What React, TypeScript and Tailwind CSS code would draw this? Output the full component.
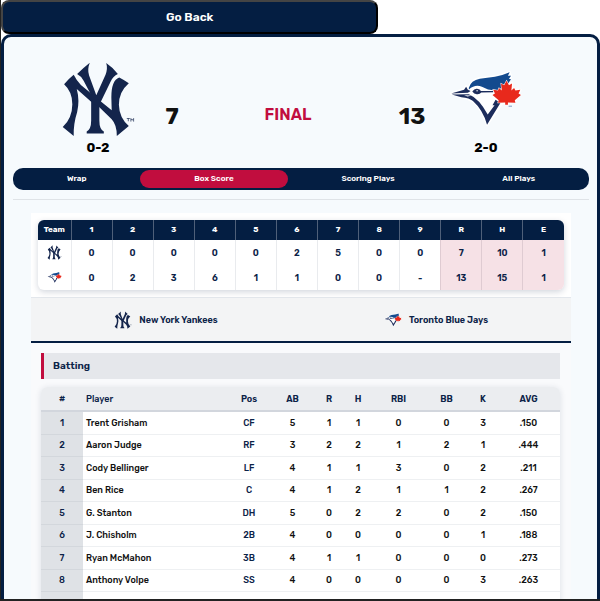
import React from "react";

type LogoProps = { className?: string };

function YankeesLogo({ className }: LogoProps) {
  return (
    <svg viewBox="18 22 216 222" className={className} role="img" aria-label="New York Yankees logo">
      <g fill="#14254c">
        <path d="M102 27Q84 41 65 60Q77 66 84 80L106 121V196Q106 222 93 228V234H143V228Q130 222 130 196V150L163 82Q170 66 184 60Q168 40 150 28Q155 44 148 62L121 122L100 64Q94 46 102 27Z" />
        <path d="M55 62Q42 72 27 90Q51 112 51 148Q51 188 23 215L55 241Q54 206 65 172Q73 138 64 104L106 141L130 157L166 192Q181 208 181 241L216 212Q188 188 187 150Q187 112 216 87Q202 77 188 70Q165 78 165 128L166 166L130 137L76 92Q64 80 55 62Z" />
      </g>
      <path d="M210 190h9M214.500 190v8M222 199v-9l4 5 4-5v9" fill="none" stroke="#14254c" strokeWidth="2" />
    </svg>
  );
}

function BlueJaysLogo({ className }: LogoProps) {
  return (
    <svg viewBox="16 18 216 204" className={className} role="img" aria-label="Toronto Blue Jays logo">
      <path
        d="M21 104L60 91L66 82L74 88Q80 64 106 59L150 54Q176 48 193 41L197 54L190 70L200 74L198 92L225 93L208 128L172 132L127 196Q112 150 88 129Q72 118 52 115Z"
        fill="#fff"
        stroke="#fff"
        strokeWidth="6"
        strokeLinejoin="round"
      />
      <path d="M74 87Q80 66 106 61L150 55Q176 50 193 42L188 52L197 52L191 61L197 62L188 76L156 96L130 92L112 84Q92 76 74 92Z" fill="#134a8e" />
      <path d="M22 104L60 93L66 84L71 93L79 97L71 102Z" fill="#1d2d5c" />
      <path d="M24 107L74 106Q104 119 129 165L149 138H143L152 122L166 132L127 195Q115 152 86 126Q76 117 52 115Z" fill="#1d2d5c" />
      <path d="M60 109L83 110L70 113Z" fill="#fff" />
      <path d="M84 98Q90 89 98 90Q107 91 109 97L145 97V100L110 101Q106 107 97 106Q89 105 84 98Z" fill="#1d2d5c" />
      <circle cx="98" cy="96" r="2" fill="#fff" />
      <path
        d="M184 67L191 80L200 75L198 95L206 88L210 95L224 93L219 104L226 108L208 124L210 131L188 130V137H180V130L159 131L161 124L143 108L150 104L145 93L159 95L162 88L170 95L168 75L177 80Z"
        fill="#e8291c"
        stroke="#fff"
        strokeWidth="3"
        paintOrder="stroke"
      />
      <path d="M190 141h10" stroke="#7f9cc4" strokeWidth="3" />
    </svg>
  );
}

const innings = ["1", "2", "3", "4", "5", "6", "7", "8", "9", "R", "H", "E"];

const lineScore = [
  { name: "New York Yankees", Logo: YankeesLogo, cells: ["0", "0", "0", "0", "0", "2", "5", "0", "0", "7", "10", "1"] },
  { name: "Toronto Blue Jays", Logo: BlueJaysLogo, cells: ["0", "2", "3", "6", "1", "1", "0", "0", "-", "13", "15", "1"] },
];

const columns = ["Pos", "AB", "R", "H", "RBI", "BB", "K", "AVG"];

const batting = [
  ["Trent Grisham", "CF", "5", "1", "1", "0", "0", "3", ".150"],
  ["Aaron Judge", "RF", "3", "2", "2", "1", "2", "1", ".444"],
  ["Cody Bellinger", "LF", "4", "1", "1", "3", "0", "2", ".211"],
  ["Ben Rice", "C", "4", "1", "2", "1", "1", "2", ".267"],
  ["G. Stanton", "DH", "5", "0", "2", "2", "0", "2", ".150"],
  ["J. Chisholm", "2B", "4", "0", "0", "0", "0", "1", ".188"],
  ["Ryan McMahon", "3B", "4", "1", "1", "0", "0", "0", ".273"],
  ["Anthony Volpe", "SS", "4", "0", "0", "0", "0", "3", ".263"],
];

const tabs = ["Wrap", "Box Score", "Scoring Plays", "All Plays"];

function Scoreboard() {
  return (
    <header className="flex pt-6 pr-[66px] pl-12 text-black">
      <div className="flex w-[74px] flex-col items-center">
        <YankeesLogo className="h-[76px] w-[74px]" />
        <p className="mt-[3px] text-[13px] leading-4 font-bold">0-2</p>
      </div>
      <p className="w-[74px] pt-[41px] text-center text-[23px] leading-7 font-bold text-[#111]">7</p>
      <p className="flex-1 pt-[42px] pr-2 text-center text-base leading-6 font-semibold text-[#c10d3e]">FINAL</p>
      <p className="w-[74px] pt-[41px] text-center text-[23px] leading-7 font-bold text-[#111]">13</p>
      <div className="flex w-[74px] flex-col items-center">
        <BlueJaysLogo className="h-[76px] w-[74px]" />
        <p className="mt-[3px] text-[13px] leading-4 font-bold">2-0</p>
      </div>
    </header>
  );
}

function LineScore() {
  return (
    <div className="border-b border-[#e3e7ec] bg-white p-[7px]">
      <div className="overflow-hidden rounded-md shadow-[0_2px_6px_rgba(4,30,66,0.18)]">
        <table className="w-full table-fixed border-collapse text-center text-[#0c2348]">
          <thead className="bg-[#041e42] text-white">
            <tr className="h-[20px] text-[8px] leading-3 font-bold">
              <th scope="col" className="w-[33px]">Team</th>
              {innings.map((label) => (
                <th key={label} scope="col" className="border-l border-[#4f6079]">{label}</th>
              ))}
            </tr>
          </thead>
          <tbody>
            {lineScore.map(({ name, Logo, cells }) => (
              <tr key={name} className="h-[25px] text-[9px] leading-3 font-semibold">
                <th scope="row"><Logo className="mx-auto size-[15px]" /></th>
                {cells.map((value, i) => (
                  <td key={i} className={i > 8 ? "border-l border-[#dfcbd2] bg-[#f6e1e6]" : "border-l border-[#e9ebee]"}>{value}</td>
                ))}
              </tr>
            ))}
          </tbody>
        </table>
      </div>
    </div>
  );
}

function Batting() {
  return (
    <section className="bg-[#f9fafc] pt-[10px] pr-[11px] pl-[10px] text-[9px] leading-3 font-medium">
      <h2 className="border-l-[3px] border-[#c10d3e] bg-[#e5e7eb] px-[9px] py-[5px] text-[10px] leading-4 font-semibold text-[#0c2348]">Batting</h2>
      <div className="mt-2 overflow-hidden rounded-t-md shadow-[0_1px_6px_rgba(4,30,66,0.12)]">
        <table className="w-full table-fixed border-collapse text-center">
          <colgroup>
            <col className="w-[42px]" />
            <col />
            <col className="w-[42px]" />
            <col className="w-[45px]" />
            <col className="w-[28px]" />
            <col className="w-[30px]" />
            <col className="w-[51px]" />
            <col className="w-[45px]" />
            <col className="w-[28px]" />
            <col className="w-[63px]" />
          </colgroup>
          <thead className="bg-[#ebedf0] text-[#0c2348]">
            <tr className="h-[24px] border-b-2 border-[#d2d6dd]">
              <th scope="col" className="font-semibold">#</th>
              <th scope="col" className="pl-[3px] text-left font-medium">Player</th>
              {columns.map((label) => <th key={label} scope="col" className="font-semibold">{label}</th>)}
            </tr>
          </thead>
          <tbody className="bg-white text-[#111]">
            {batting.map(([name, ...stats], i) => (
              <tr key={name} className="border-b border-[#eef0f2] odd:h-[23px] even:h-[22px]">
                <td className="border-b border-[#d3d7dc] bg-[#dfe2e6] text-[#0c2348]">{i + 1}</td>
                <th scope="row" className="pl-[3px] text-left font-medium whitespace-nowrap">{name}</th>
                {stats.map((value, j) => <td key={j} className={j === 0 ? "text-[#0c2348]" : ""}>{value}</td>)}
              </tr>
            ))}
            <tr className="h-[23px]">
              <td className="bg-[#dfe2e6]" />
              <td colSpan={9} />
            </tr>
          </tbody>
        </table>
      </div>
    </section>
  );
}

export default function App() {
  return (
    <div className="h-screen overflow-hidden border-b-2 border-l border-[#222] bg-white font-['Rubik','Inter',sans-serif]">
      <button type="button" className="block h-[34px] w-[63%] rounded-lg border-2 border-t-[#444] border-r-black border-b-black border-l-[#444] bg-[#041e42] text-xs leading-4 font-semibold text-white">
        Go Back
      </button>
      <main className="rounded-t-[10px] border-[3px] border-[#041e42] bg-[#f6fafd] pr-2 pl-[9px]">
        <Scoreboard />
        <nav className="mt-3 flex rounded-[10px] bg-[#041e42] py-[2px] text-[8px] leading-[18px] font-semibold text-white">
          {tabs.map((tab) => (
            <button key={tab} type="button" className={tab === "Box Score" ? "flex-auto rounded-full bg-[#c10d3e]" : "flex-auto rounded-full"}>
              {tab}
            </button>
          ))}
        </nav>
        <hr className="mt-[9px] border-[#dfe3e7]" />
        <div className="mx-[18px] mt-[13px]">
          <LineScore />
          <div className="grid grid-cols-2 border-b-2 border-[#041e42] bg-[#f3f4f5] text-[9px] leading-4 font-semibold text-[#0c2348]">
            <button type="button" className="flex h-[43px] items-center justify-center gap-[7px]">
              <YankeesLogo className="size-[18px]" />
              New York Yankees
            </button>
            <button type="button" className="flex h-[43px] items-center justify-center gap-[7px]">
              <BlueJaysLogo className="size-[18px]" />
              Toronto Blue Jays
            </button>
          </div>
          <Batting />
        </div>
      </main>
    </div>
  );
}
